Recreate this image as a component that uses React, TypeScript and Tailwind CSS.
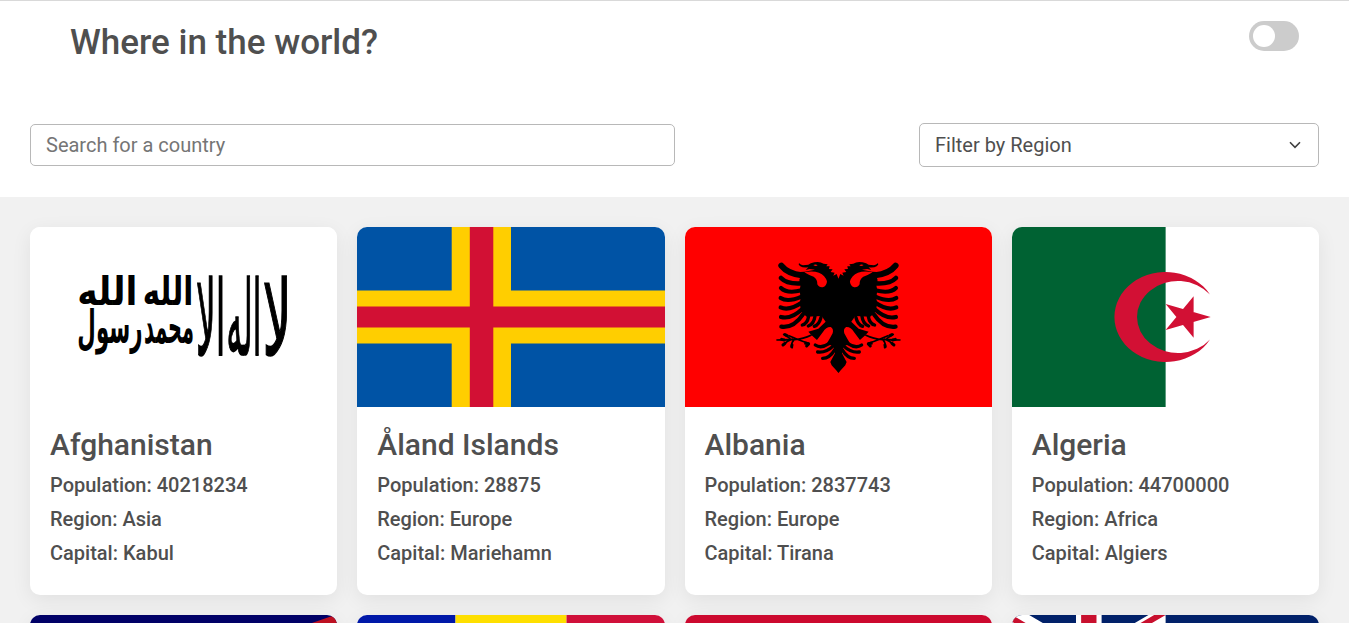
import type { ReactNode } from 'react';

function Flag({ viewBox, children }: { viewBox: string; children: ReactNode }) {
  return (
    <svg viewBox={viewBox} preserveAspectRatio="none" className="block h-[180px] w-full">
      {children}
    </svg>
  );
}

type Word = { text: string; x: number; y: number; w: number; size: number; sy: number };

const calligraphy: Word[] = [
  { text: 'لا', x: 608, y: 284, w: 88, size: 120, sy: 2.6 },
  { text: 'اله', x: 500, y: 284, w: 104, size: 120, sy: 2.6 },
  { text: 'الا', x: 408, y: 284, w: 88, size: 120, sy: 2.6 },
  { text: 'الله', x: 248, y: 136, w: 152, size: 100, sy: 1.2 },
  { text: 'محمد', x: 252, y: 250, w: 150, size: 100, sy: 1.4 },
  { text: 'الله', x: 52, y: 136, w: 180, size: 100, sy: 1.2 },
  { text: 'رسول', x: 52, y: 250, w: 196, size: 100, sy: 1.4 },
];

function Afghanistan() {
  return (
    <Flag viewBox="-90 -99 922 540">
      <rect x="-90" y="-99" width="922" height="540" fill="#fff" />
      {calligraphy.map((p, i) => (
        <text
          key={i}
          transform={`translate(${p.x} ${p.y}) scale(1 ${p.sy})`}
          fontSize={p.size}
          textLength={p.w}
          lengthAdjust="spacingAndGlyphs"
          className={
            p.sy > 2
              ? "fill-black stroke-black stroke-[2] font-['DejaVu_Sans',sans-serif]"
              : "fill-black font-['DejaVu_Sans',sans-serif] font-bold"
          }
        >
          {p.text}
        </text>
      ))}
    </Flag>
  );
}

function Aland() {
  return (
    <Flag viewBox="0 0 307.25 180">
      <rect width="308" height="180" fill="#0053a5" />
      <path d="M94.7 0h59.3v180h-59.3zM0 63.6h308v52.8H0z" fill="#ffce00" />
      <path d="M112.8 0h23.5v180h-23.5zM0 79.5h308v21H0z" fill="#d21034" />
    </Flag>
  );
}

function EagleHalf() {
  return (
    <g>
      <path d="M223 86L220.5 86L215 72L205 77L209 68L197 66L203 58L192 57L194 49L184 49L188 43L176 41Q164 33 148 37Q136 40 130 44L114 46Q106 45 103 40Q98 43 106 49Q114 54 130 52L122 60L134 57L150 59Q134 62 120 65L105 66L108 75L103 90L107 105L104 120L107 145L104 160L109 185L125 200L170 198L182 215L160 236L130 245L140 256L156 270L174 246Q184 230 197 231Q207 236 203 250L194 266L186 280L206 290L210 310L196 336L200 346L220.5 368L223 366Z" />
      <path d="M118 67Q134 77 146 80Q158 88 157 103Q162 113 173 112Q186 108 186 94Q181 76 162 68Q142 61 118 67Z" fill="#f00" />
      <path d="M145 45Q152 41 158 46Q152 50 145 45Z" fill="#f00" />
      <g fill="none" stroke="#000" strokeLinecap="round" strokeWidth="12.5">
        <path d="M49 47Q68 71 110 76" strokeWidth="18" />
        <path d="M48 84Q66 103 110 100" strokeWidth="14" />
        <path d="M48 114Q66 132 110 121" />
        <path d="M47 144Q68 158 110 140" />
        <path d="M47 172Q72 184 112 157" />
        <path d="M48 201Q78 209 112 177" />
        <path d="M49 230Q86 235 114 193" />
        <path d="M112 225Q127 221 131 199" strokeWidth="10" />
        <path d="M130 228Q147 222 150 199" strokeWidth="10" />
        <path d="M148 229Q163 224 168 202" strokeWidth="10" />
        <path d="M151 285Q168 297 192 281L208 278" strokeWidth="10" />
        <path d="M158 306Q182 310 207 286" strokeWidth="10" />
        <path d="M173 325Q194 325 210 298" strokeWidth="10" />
        <path d="M138 256Q116 267 88 269Q61 268 36 270M72 257Q96 268 132 280M82 267Q66 273 54 285M86 271Q77 280 82 293M75 265L56 253" strokeWidth="5" />
        <path d="M50 268L58 270M54 285L60 280M80 290L81 285M60 254L66 257M122 280L130 281M125 288L131 282" strokeWidth="9" />
      </g>
    </g>
  );
}

function Albania() {
  return (
    <Flag viewBox="-240 -69 922 540">
      <rect x="-240" y="-69" width="922" height="540" fill="#f00" />
      <EagleHalf />
      <g transform="translate(441 0) scale(-1 1)">
        <EagleHalf />
      </g>
    </Flag>
  );
}

function Algeria() {
  return (
    <Flag viewBox="0 0 900 600">
      <rect width="900" height="600" fill="#fff" />
      <rect width="450" height="600" fill="#006233" />
      <path
        d="M579.9 225A150 150 0 1 0 579.9 375A120 120 0 1 1 579.9 225ZM582 300L450 257L532 369V231L450 343Z"
        fill="#d21034"
      />
    </Flag>
  );
}

function AmericanSamoa() {
  return (
    <Flag viewBox="0 0 307.25 180">
      <rect width="308" height="180" fill="#006" />
      <path d="M308 -1L279 9L0 90L279 171L308 181Z" fill="#bd1021" />
      <path d="M308 13L22 90L308 167Z" fill="#fff" />
    </Flag>
  );
}

function Andorra() {
  return (
    <Flag viewBox="0 0 307.25 180">
      <rect width="98.5" height="180" fill="#0018a8" />
      <rect x="98.5" width="111" height="180" fill="#fedf00" />
      <rect x="209.5" width="99" height="180" fill="#d0103a" />
    </Flag>
  );
}

function Angola() {
  return (
    <Flag viewBox="0 0 307.25 180">
      <rect width="308" height="90" fill="#cc092f" />
      <rect y="90" width="308" height="90" />
    </Flag>
  );
}

function Anguilla() {
  return (
    <Flag viewBox="0 0 120 60">
      <clipPath id="canton">
        <path d="M0 0h60v30H0z" />
      </clipPath>
      <clipPath id="saltire">
        <path d="M30 15h30v15zv15H0zH0V0zV0h30z" />
      </clipPath>
      <rect width="120" height="60" fill="#012169" />
      <g clipPath="url(#canton)">
        <path d="M0 0L60 30M60 0L0 30" stroke="#fff" strokeWidth="6" />
        <path d="M0 0L60 30M60 0L0 30" clipPath="url(#saltire)" stroke="#c8102e" strokeWidth="4" />
        <path d="M30 0v30M0 15h60" stroke="#fff" strokeWidth="10" />
        <path d="M30 0v30M0 15h60" stroke="#c8102e" strokeWidth="6" />
      </g>
    </Flag>
  );
}

const countries = [
  { name: 'Afghanistan', population: 40218234, region: 'Asia', capital: 'Kabul', flag: <Afghanistan /> },
  { name: 'Åland Islands', population: 28875, region: 'Europe', capital: 'Mariehamn', flag: <Aland /> },
  { name: 'Albania', population: 2837743, region: 'Europe', capital: 'Tirana', flag: <Albania /> },
  { name: 'Algeria', population: 44700000, region: 'Africa', capital: 'Algiers', flag: <Algeria /> },
];

const nextFlags = [<AmericanSamoa />, <Andorra />, <Angola />, <Anguilla />];

const cardClass =
  'h-[368px] overflow-hidden rounded-[10px] bg-white shadow-[0_5px_20px_rgba(0,0,0,0.07)]';

export default function App() {
  return (
    <div className="h-screen overflow-hidden border-t border-[#d9d9d9] bg-[#f1f1f1] font-[Roboto,sans-serif] text-[#4f4f4f]">
      <div className="h-[196px] bg-white">
        <header className="flex h-[82px] items-start justify-between pr-[50px] pl-[70px]">
          <h1 className="pt-[21px] text-[35px] leading-[42px] font-medium">Where in the world?</h1>
          <button aria-label="Toggle theme" className="mt-5 flex h-[30px] w-[50px] items-center rounded-full bg-[#ccc] pl-1">
            <span className="size-[22px] rounded-full bg-white" />
          </button>
        </header>
        <div className="flex items-center justify-between px-[30px] pt-10">
          <input
            placeholder="Search for a country"
            className="h-[42px] w-[645px] rounded-[5px] border border-[#b8b8b8] px-[15px] text-[20px] placeholder:text-[#757575]"
          />
          <button className="flex h-11 w-[400px] items-center justify-between rounded-[5px] border border-[#b8b8b8] pr-[17px] pl-[15px] text-[20px]">
            Filter by Region
            <svg viewBox="0 0 12 8" className="h-2 w-3 fill-none stroke-[#3f3f3f] stroke-[1.6]">
              <path d="M1 1.3L6 6.3L11 1.3" />
            </svg>
          </button>
        </div>
      </div>
      <main className="grid grid-cols-4 gap-5 p-[30px]">
        {countries.map((c) => (
          <article key={c.name} className={cardClass}>
            {c.flag}
            <div className="px-5 pt-5 font-medium">
              <h2 className="text-[30px] leading-[36px]">{c.name}</h2>
              <div className="pt-[5px] text-[20px] leading-[34px]">
                <p>Population: {c.population}</p>
                <p>Region: {c.region}</p>
                <p>Capital: {c.capital}</p>
              </div>
            </div>
          </article>
        ))}
        {nextFlags.map((flag, i) => (
          <article key={i} className={cardClass}>
            {flag}
          </article>
        ))}
      </main>
    </div>
  );
}
